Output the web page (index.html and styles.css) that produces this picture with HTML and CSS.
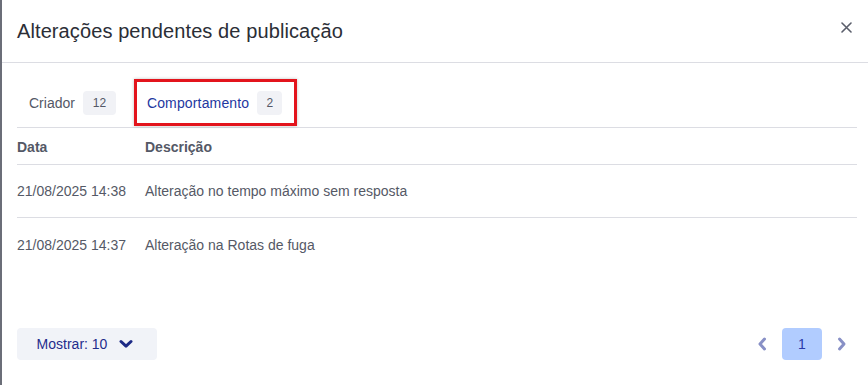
FILE: index.html
```html
<!DOCTYPE html>
<html lang="pt">
<head>
<meta charset="utf-8">
<link rel="stylesheet" href="styles.css">
</head>
<body>
<div class="modal">
  <header class="modal-head">
    <h1 class="title">Alterações pendentes de publicação</h1>
    <button class="close" aria-label="Fechar">
      <svg width="11" height="11" viewBox="0 0 11 11"><path d="M1 1L10 10M10 1L1 10" stroke="#5a5e6b" stroke-width="1.6" stroke-linecap="round"/></svg>
    </button>
  </header>
  <div class="body">
    <nav class="tabs">
      <div class="tab"><span>Criador</span><span class="badge">12</span></div>
      <div class="tab active"><span>Comportamento</span><span class="badge">2</span></div>
    </nav>
    <div class="table">
      <div class="row head"><div class="c1">Data</div><div class="c2">Descrição</div></div>
      <div class="row"><div class="c1">21/08/2025 14:38</div><div class="c2">Alteração no tempo máximo sem resposta</div></div>
      <div class="row last"><div class="c1">21/08/2025 14:37</div><div class="c2">Alteração na Rotas de fuga</div></div>
    </div>
    <footer class="foot">
      <button class="show">Mostrar: 10
        <svg width="14" height="10" viewBox="0 0 14 10"><path d="M2 2.5L7 7.2L12 2.5" fill="none" stroke="#1c2a86" stroke-width="3" stroke-linecap="round" stroke-linejoin="round"/></svg>
      </button>
      <div class="pager">
        <svg class="chev" width="12" height="16" viewBox="0 0 12 16"><path d="M8.5 3L4 8L8.5 13" fill="none" stroke="#8890c6" stroke-width="3" stroke-linecap="round" stroke-linejoin="round"/></svg>
        <span class="page">1</span>
        <svg class="chev" width="12" height="16" viewBox="0 0 12 16"><path d="M3.5 3L8 8L3.5 13" fill="none" stroke="#8890c6" stroke-width="3" stroke-linecap="round" stroke-linejoin="round"/></svg>
      </div>
    </footer>
  </div>
</div>
</body>
</html>
```
FILE: styles.css
```css
* { box-sizing: border-box; }
html, body { margin: 0; padding: 0; background: #fff; }
body {
  font-family: "Liberation Sans", Arial, sans-serif;
  width: 868px;
  height: 385px;
  overflow: hidden;
}
.modal {
  height: 385px;
  border-left: 2px solid #6b6e78;
  margin-top: 2px;
  background: #fff;
}
.modal-head {
  height: 63px;
  border-bottom: 1px solid #dcdde3;
  display: flex;
  align-items: center;
  justify-content: space-between;
  padding: 0 15px 0 15px;
  margin-top: -2px;
}
.title {
  margin: 0;
  font-size: 20px;
  font-weight: 400;
  color: #2b2e36;
  padding-top: 0;
  letter-spacing: 0.1px;
}
.close {
  border: 0;
  background: none;
  padding: 0;
  width: 12px;
  height: 12px;
  display: flex;
  margin-top: -6px;
}
.body { padding: 0 11px 0 15px; }
.tabs {
  display: flex;
  height: 65px;
  align-items: flex-end;
  gap: 18px;
  padding-left: 12px;
  padding-bottom: 1px;
  border-bottom: 1px solid #dcdde3;
}
.tab {
  display: flex;
  align-items: center;
  gap: 8px;
  font-size: 14px;
  color: #545866;
  height: 47px;
}
.tab.active {
  color: #2337a0;
  border: 3px solid #e3141c;
  box-shadow: 0 0 3px rgba(0,0,0,0.25);
  padding: 0 12px 0 10px;
  letter-spacing: 0.15px;
}
.badge {
  background: #f1f2f6;
  border-radius: 4px;
  font-size: 12px;
  color: #545866;
  height: 24px;
  min-width: 25px;
  padding: 0 8px;
  display: inline-flex;
  align-items: center;
  justify-content: center;
  letter-spacing: 0;
}
.tab:first-child .badge { min-width: 33px; }
.row {
  display: flex;
  align-items: center;
  height: 53px;
  border-bottom: 1px solid #dcdde3;
  font-size: 14px;
  color: #555966;
}
.row.head {
  height: 37px;
  font-weight: 700;
  color: #545866;
  padding-top: 1px;
}
.row.last { border-bottom: 0; }
.c1 { width: 128px; flex: none; }
.c2 { flex: 1; }
.foot {
  display: flex;
  justify-content: space-between;
  align-items: center;
  margin-top: 57px;
}
.show {
  font-family: inherit;
  border: 0;
  background: #f1f3f8;
  border-radius: 4px;
  height: 32px;
  width: 140px;
  font-size: 14px;
  color: #1f2d8c;
  display: flex;
  align-items: center;
  justify-content: center;
  gap: 12px;
  padding: 0 4px 0 0;
}
.pager {
  display: flex;
  align-items: center;
  gap: 14px;
  margin-right: 9px;
}
.page {
  width: 40px;
  height: 32px;
  background: #b1ccff;
  border-radius: 4px;
  color: #2a3aa8;
  font-size: 14px;
  display: flex;
  align-items: center;
  justify-content: center;
}
```
